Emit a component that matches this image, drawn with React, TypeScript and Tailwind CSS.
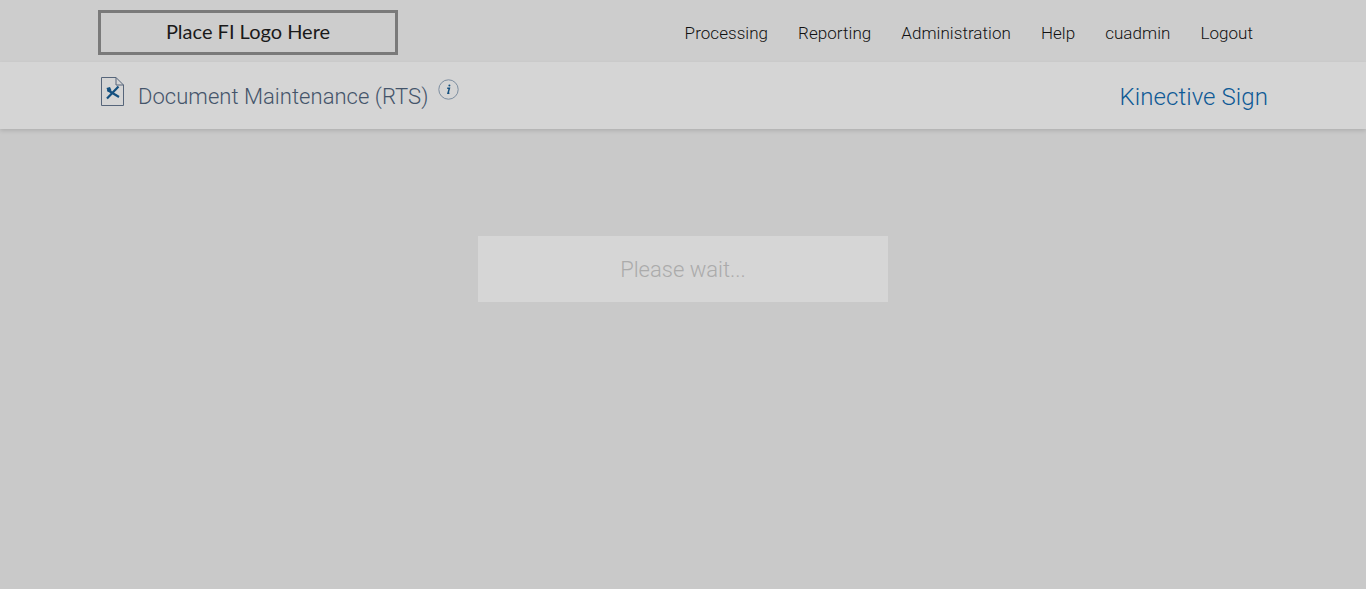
import React from "react";

const navItems = ["Processing", "Reporting", "Administration", "Help", "cuadmin", "Logout"];

const DocIcon = () => (
  <svg width="25" height="31" viewBox="0 0 25 31" fill="none" className="block">
    <path d="M1.5 1.5H16L23.5 9V29.5H1.5Z" fill="#d5d5d5" stroke="#56657a" strokeWidth="1" />
    <path d="M16 1.5V9H23.5" stroke="#56657a" strokeWidth="1" />
    <path d="M7 22.5L18.5 10.5" stroke="#14507f" strokeWidth="2.2" />
    <path d="M7.5 14L19 21" stroke="#14507f" strokeWidth="2.2" />
    <path d="M6.5 12L10 11L11.5 14.5L8 16Z" fill="#14507f" />
  </svg>
);

const InfoIcon = () => (
  <svg width="21" height="21" viewBox="0 0 21 21" fill="none" className="block">
    <circle cx="10.5" cy="10.5" r="9.7" stroke="#7d8ea0" strokeWidth="1" />
    <path d="M9.2 9.2H11.4L10 14.2H11.4" stroke="#14507f" strokeWidth="1.5" />
    <circle cx="11.4" cy="6.6" r="1" fill="#14507f" />
  </svg>
);

export default function App() {
  return (
    <div className="flex flex-col h-[589px] overflow-hidden bg-[#c9c9c9] font-['Roboto',sans-serif]">
      <div className="flex items-start justify-between h-[62px] bg-[#cdcdcd] pl-[98px] pr-[113px]">
        <div className="flex items-center justify-center w-[300px] h-[45px] mt-[10px] pb-[4px] border-[3px] border-[#7a7a7a] font-['Lato',sans-serif] text-[20px] text-[#1a1a1a]">
          Place FI Logo Here
        </div>
        <div className="flex gap-[30px] pt-[23px] text-[17px] leading-[20px] font-light tracking-[0.05px] text-[#111111]">
          {navItems.map((item) => (
            <span key={item}>{item}</span>
          ))}
        </div>
      </div>

      <div className="relative z-10 flex items-start justify-between h-[67px] bg-[#d5d5d5] shadow-[0_2px_4px_rgba(0,0,0,0.12)] pl-[100px] pr-[98px]">
        <div className="flex items-start">
          <div className="mt-[14px]">
            <DocIcon />
          </div>
          <span className="ml-[13px] mt-[21px] text-[22px] leading-[28px] font-light tracking-[0.04px] text-[#44546a]">
            Document Maintenance (RTS)
          </span>
          <div className="ml-[10px] mt-[17px]">
            <InfoIcon />
          </div>
        </div>
        <span className="mt-[20px] text-[24px] leading-[30px] font-light tracking-[0.08px] text-[#0f5a96]">Kinective Sign</span>
      </div>

      <div className="flex justify-center pt-[107px]">
        <div className="flex items-center justify-center w-[410px] h-[66px] bg-[#d6d6d6] text-[22px] font-light text-[#ababab]">
          Please wait...
        </div>
      </div>
    </div>
  );
}
